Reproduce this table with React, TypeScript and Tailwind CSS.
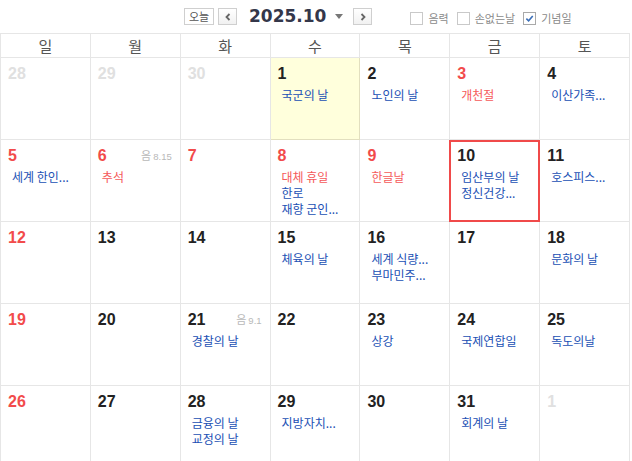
import * as React from 'react';

type Ev = { t: string; red?: boolean };
type Day = {
  d: number;
  tone?: 'dim' | 'red' | 'black';
  lunar?: string;
  events?: Ev[];
  today?: boolean;
  selected?: boolean;
};

const WEEK = ['일', '월', '화', '수', '목', '금', '토'];

const ROWS: Day[][] = [
  [
    { d: 28, tone: 'dim' },
    { d: 29, tone: 'dim' },
    { d: 30, tone: 'dim' },
    { d: 1, today: true, events: [{ t: '국군의 날' }] },
    { d: 2, events: [{ t: '노인의 날' }] },
    { d: 3, tone: 'red', events: [{ t: '개천절', red: true }] },
    { d: 4, events: [{ t: '이산가족...' }] },
  ],
  [
    { d: 5, tone: 'red', events: [{ t: '세계 한인...' }] },
    { d: 6, tone: 'red', lunar: '8.15', events: [{ t: '추석', red: true }] },
    { d: 7, tone: 'red' },
    { d: 8, tone: 'red', events: [{ t: '대체 휴일', red: true }, { t: '한로' }, { t: '재향 군인...' }] },
    { d: 9, tone: 'red', events: [{ t: '한글날', red: true }] },
    { d: 10, selected: true, events: [{ t: '임산부의 날' }, { t: '정신건강...' }] },
    { d: 11, events: [{ t: '호스피스...' }] },
  ],
  [
    { d: 12, tone: 'red' },
    { d: 13 },
    { d: 14 },
    { d: 15, events: [{ t: '체육의 날' }] },
    { d: 16, events: [{ t: '세계 식량...' }, { t: '부마민주...' }] },
    { d: 17 },
    { d: 18, events: [{ t: '문화의 날' }] },
  ],
  [
    { d: 19, tone: 'red' },
    { d: 20 },
    { d: 21, lunar: '9.1', events: [{ t: '경찰의 날' }] },
    { d: 22 },
    { d: 23, events: [{ t: '상강' }] },
    { d: 24, events: [{ t: '국제연합일' }] },
    { d: 25, events: [{ t: '독도의날' }] },
  ],
  [
    { d: 26, tone: 'red' },
    { d: 27 },
    { d: 28, events: [{ t: '금융의 날' }, { t: '교정의 날' }] },
    { d: 29, events: [{ t: '지방자치...' }] },
    { d: 30 },
    { d: 31, events: [{ t: '회계의 날' }] },
    { d: 1, tone: 'dim' },
  ],
];

const KR = "font-['Noto_Sans_CJK_KR','Noto_Sans',sans-serif]";

function Check({ label, checked }: { label: string; checked?: boolean }) {
  return (
    <label className="flex items-center gap-[5px]">
      <span
        className={
          'grid h-[13px] w-[13px] place-items-center border bg-white ' +
          (checked ? 'border-[#a9a9a9]' : 'border-[#c9c9c9]')
        }
      >
        {checked && (
          <svg viewBox="0 0 10 10" className="h-[9px] w-[9px]">
            <path d="M1.5 5.2 L4 7.6 L8.6 2.2" fill="none" stroke="#3b6fb8" strokeWidth="1.8" />
          </svg>
        )}
      </span>
      <span className="text-[11px] leading-none text-[#8a8a8a]">{label}</span>
    </label>
  );
}

function Cell({ day }: { day: Day }) {
  const num =
    day.tone === 'dim' ? 'text-[#e0e0e0]' : day.tone === 'red' ? 'text-[#f24b4b]' : 'text-[#222]';
  return (
    <div
      className={
        'relative h-[82px] border-r border-b ' +
        (day.today ? 'border-[#e2dfbf] bg-[#ffffdc]' : 'border-[#e6e6e6] bg-white')
      }
    >
      <div className="flex items-center justify-between pt-[6px] pr-[8px] pl-[7px]">
        <span className={"font-['Liberation_Sans',Arial,sans-serif] text-[16px] leading-[20px] font-bold " + num}>
          {day.d}
        </span>
        {day.lunar && (
          <span className="flex items-baseline gap-[2px] text-[#b8b8b8]">
            <span className="text-[11px]">음</span>
            <span className="font-['Liberation_Sans',Arial,sans-serif] text-[9.5px]">{day.lunar}</span>
          </span>
        )}
      </div>
      <div className="mt-[3px] flex flex-col pl-[11px]">
        {day.events?.map((e, i) => (
          <span
            key={i}
            className={'text-[12px] leading-[16px] whitespace-nowrap ' + (e.red ? 'text-[#f55a5a]' : 'text-[#2150b4]')}
          >
            {e.t}
          </span>
        ))}
      </div>
      {day.selected && (
        <div className="pointer-events-none absolute top-0 -right-px -bottom-px -left-px border-2 border-[#f04a4a]" />
      )}
    </div>
  );
}

export default function App() {
  return (
    <div className={'h-[461px] w-[632px] overflow-hidden bg-white ' + KR}>
      {/* toolbar */}
      <div className="relative flex h-[33px] items-center">
        <div className="ml-[184px] flex items-center">
          <button className="grid h-[17px] w-[30px] place-items-center border border-[#cfcfcf] bg-white text-[11px] leading-none text-[#555]">
            오늘
          </button>
          <button className="ml-[4px] grid h-[17px] w-[19px] place-items-center border border-[#cfcfcf] bg-gradient-to-b from-white to-[#f1f1f1]">
            <svg viewBox="0 0 8 8" className="h-[8px] w-[8px]">
              <path d="M5.5 1 L2.5 4 L5.5 7" fill="none" stroke="#666" strokeWidth="1.8" />
            </svg>
          </button>
          <span className="ml-[12px] font-['DejaVu_Sans',sans-serif] text-[17px] leading-none font-bold text-[#34374a]">
            2025.10
          </span>
          <svg viewBox="0 0 8 5" className="ml-[9px] h-[5px] w-[8px]">
            <path d="M0 0 L8 0 L4 5 Z" fill="#777" />
          </svg>
          <button className="ml-[10px] grid h-[17px] w-[19px] place-items-center border border-[#cfcfcf] bg-gradient-to-b from-white to-[#f1f1f1]">
            <svg viewBox="0 0 8 8" className="h-[8px] w-[8px]">
              <path d="M2.5 1 L5.5 4 L2.5 7" fill="none" stroke="#666" strokeWidth="1.8" />
            </svg>
          </button>
        </div>
        <div className="ml-[38px] flex items-center gap-[8px] pt-[3px]">
          <Check label="음력" />
          <Check label="손없는날" />
          <Check label="기념일" checked />
        </div>
      </div>

      {/* calendar */}
      <div className="grid w-[630px] grid-cols-7 border-t border-l border-[#e6e6e6]">
        {WEEK.map((w) => (
          <div
            key={w}
            className="grid h-[24px] place-items-center border-r border-b border-[#e6e6e6] text-[15px] leading-none text-[#555]"
          >
            {w}
          </div>
        ))}
        {ROWS.flat().map((day, i) => (
          <Cell key={i} day={day} />
        ))}
      </div>
    </div>
  );
}
